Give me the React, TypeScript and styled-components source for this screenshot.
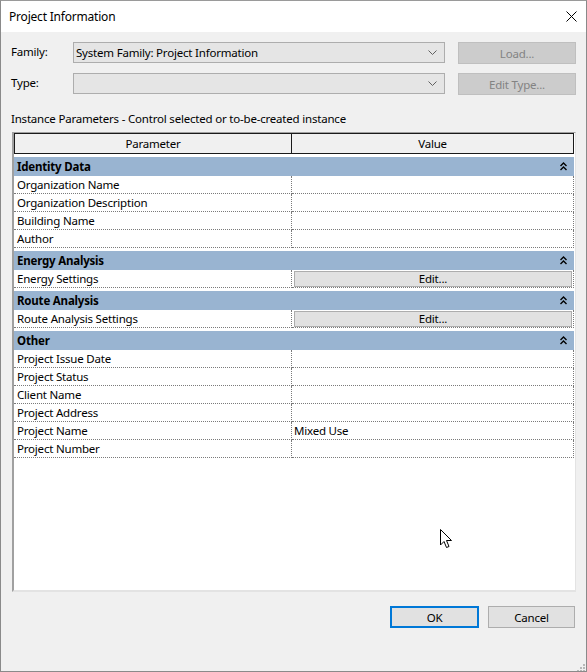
import React from "react";
import styled, { createGlobalStyle } from "styled-components";

const Global = createGlobalStyle`
  html, body { margin: 0; padding: 0; background: #ffffff; }
  * { box-sizing: border-box; }
  body {
    font-family: "Noto Sans", "Segoe UI", sans-serif;
    font-size: 11.5px;
    letter-spacing: -0.2px;
    color: #000;
  }
`;

const Window = styled.div`
  position: relative;
  width: 587px;
  height: 672px;
  border: 1px solid #8a8a8a;
  border-top-color: #9a9a9a;
  background: #f0f0f0;
  display: flex;
  flex-direction: column;
  overflow: hidden;
`;

const TitleBar = styled.div`
  height: 31px;
  background: #ffffff;
  display: flex;
  align-items: center;
  justify-content: space-between;
  padding: 0 8px 0 8px;
  flex-shrink: 0;
`;

const Title = styled.span`
  font-size: 12px;
  color: #000;
  padding-bottom: 1px;
`;

const CloseBtn = styled.div`
  width: 12px;
  height: 12px;
  margin-right: 1px;
  display: flex;
  align-items: center;
  justify-content: center;
`;

const Body = styled.div`
  flex: 1;
  display: flex;
  flex-direction: column;
  padding: 10px 10px 0 10px;
`;

const FieldRow = styled.div<{ $mt?: number }>`
  display: grid;
  grid-template-columns: 49px 372px 118px;
  column-gap: 13px;
  align-items: start;
  margin-top: ${(p) => p.$mt ?? 0}px;
`;

const FieldLabel = styled.label`
  line-height: 20px;
`;

const Combo = styled.div`
  height: 21px;
  background: #e5e5e5;
  border: 1px solid #adadad;
  display: flex;
  align-items: center;
  justify-content: space-between;
  padding: 0 7px 0 2px;
`;

const SideButton = styled.div`
  height: 22px;
  background: #cccccc;
  border: 1px solid #bfbfbf;
  color: #838383;
  display: flex;
  align-items: center;
  justify-content: center;
`;

const Caption = styled.div`
  margin-top: 16px;
  line-height: 16px;
`;

const Grid = styled.div`
  margin-top: 5px;
  margin-left: 1px;
  width: 564px;
  height: 460px;
  background: #ffffff;
  border-top: 1px solid #a0a0a0;
  border-left: 2px solid #a0a0a0;
  border-right: 1px solid #e3e3e3;
  border-bottom: 2px solid #e3e3e3;
  display: flex;
  flex-direction: column;
`;

const HeaderRow = styled.div`
  display: grid;
  grid-template-columns: 278px 282px;
  height: 21px;
  flex-shrink: 0;
`;

const HeaderCell = styled.div<{ $first?: boolean }>`
  background: #f0f0f0;
  border: 1px solid #1a1a1a;
  border-left-width: ${(p) => (p.$first ? 1 : 0)}px;
  display: flex;
  align-items: center;
  justify-content: center;
`;

const GroupRow = styled.div`
  margin-top: 3px;
  width: 560px;
  height: 19px;
  background: #99b4d1;
  display: flex;
  align-items: center;
  justify-content: space-between;
  padding: 0 7px 0 3px;
  font-weight: 700;
  flex-shrink: 0;
`;

const Row = styled.div`
  display: grid;
  grid-template-columns: 278px 282px;
  height: 18px;
  flex-shrink: 0;
`;

const Cell = styled.div`
  border-bottom: 1px dotted #7a7a7a;
  border-right: 1px dotted #7a7a7a;
  display: flex;
  align-items: center;
  padding-left: 3px;
  white-space: nowrap;
  overflow: hidden;
`;

const ValueCell = styled(Cell)`
  padding-left: 2px;
`;

const EditButton = styled.div`
  flex: 1;
  height: 16px;
  margin-right: 1px;
  background: #e1e1e1;
  border: 1px solid #adadad;
  display: flex;
  align-items: center;
  justify-content: center;
`;

const Footer = styled.div`
  display: flex;
  justify-content: flex-end;
  gap: 9px;
  padding: 14px 1px 0 0;
`;

const DialogButton = styled.div<{ $default?: boolean; $w: number }>`
  width: ${(p) => p.$w}px;
  height: 22px;
  background: #e1e1e1;
  border: ${(p) => (p.$default ? "2px solid #0078d7" : "1px solid #adadad")};
  display: flex;
  align-items: center;
  justify-content: center;
`;

const Grip = styled.div`
  position: absolute;
  right: 1px;
  bottom: 1px;
  width: 10px;
  height: 10px;
`;

const Cursor = styled.div`
  position: absolute;
  left: 439px;
  top: 528px;
  width: 13px;
  height: 20px;
`;

const Chevron = () => (
  <svg width="9" height="5" viewBox="0 0 9 5">
    <path d="M0.5 0.5 L4.5 4.5 L8.5 0.5" fill="none" stroke="#606060" strokeWidth="1" />
  </svg>
);

const Collapse = () => (
  <svg width="7" height="9" viewBox="0 0 7 9">
    <path d="M0.5 4 L3.5 1 L6.5 4 M0.5 8 L3.5 5 L6.5 8" fill="none" stroke="#000" strokeWidth="1.4" />
  </svg>
);

type R = { label: string; value?: string; edit?: boolean };
type G = { name: string; rows: R[] };

const groups: G[] = [
  {
    name: "Identity Data",
    rows: [
      { label: "Organization Name" },
      { label: "Organization Description" },
      { label: "Building Name" },
      { label: "Author" },
    ],
  },
  { name: "Energy Analysis", rows: [{ label: "Energy Settings", edit: true }] },
  { name: "Route Analysis", rows: [{ label: "Route Analysis Settings", edit: true }] },
  {
    name: "Other",
    rows: [
      { label: "Project Issue Date" },
      { label: "Project Status" },
      { label: "Client Name" },
      { label: "Project Address" },
      { label: "Project Name", value: "Mixed Use" },
      { label: "Project Number" },
    ],
  },
];

export default function App() {
  return (
    <>
      <Global />
      <Window>
        <TitleBar>
          <Title>Project Information</Title>
          <CloseBtn>
            <svg width="11" height="11" viewBox="0 0 11 11">
              <path d="M0.5 0.5 L10.5 10.5 M10.5 0.5 L0.5 10.5" stroke="#000" strokeWidth="1" fill="none" />
            </svg>
          </CloseBtn>
        </TitleBar>
        <Body>
          <FieldRow>
            <FieldLabel>Family:</FieldLabel>
            <Combo>
              <span>System Family: Project Information</span>
              <Chevron />
            </Combo>
            <SideButton>Load...</SideButton>
          </FieldRow>
          <FieldRow $mt={9}>
            <FieldLabel>Type:</FieldLabel>
            <Combo>
              <span />
              <Chevron />
            </Combo>
            <SideButton>Edit Type...</SideButton>
          </FieldRow>
          <Caption>Instance Parameters - Control selected or to-be-created instance</Caption>
          <Grid>
            <HeaderRow>
              <HeaderCell $first>Parameter</HeaderCell>
              <HeaderCell>Value</HeaderCell>
            </HeaderRow>
            {groups.map((g) => (
              <React.Fragment key={g.name}>
                <GroupRow>
                  <span>{g.name}</span>
                  <Collapse />
                </GroupRow>
                {g.rows.map((r) => (
                  <Row key={r.label}>
                    <Cell>{r.label}</Cell>
                    <ValueCell>
                      {r.edit ? <EditButton>Edit...</EditButton> : r.value ?? ""}
                    </ValueCell>
                  </Row>
                ))}
              </React.Fragment>
            ))}
          </Grid>
          <Footer>
            <DialogButton $default $w={89}>OK</DialogButton>
            <DialogButton $w={87}>Cancel</DialogButton>
          </Footer>
        </Body>
        <Grip>
          <svg width="10" height="10" viewBox="0 0 10 10">
            {[
              [8, 2], [8, 5], [5, 5], [8, 8], [5, 8], [2, 8],
            ].map(([x, y]) => (
              <rect key={`${x}-${y}`} x={x} y={y} width="2" height="2" fill="#b8b8b8" />
            ))}
          </svg>
        </Grip>
        <Cursor>
          <svg width="13" height="20" viewBox="0 0 13 20">
            <path
              d="M0.5 0.5 L0.5 16 L4 12.5 L6.5 18.5 L9 17.5 L6.5 11.5 L11.5 11.5 Z"
              fill="#fff"
              stroke="#000"
              strokeWidth="1"
              strokeLinejoin="miter"
            />
          </svg>
        </Cursor>
      </Window>
    </>
  );
}
